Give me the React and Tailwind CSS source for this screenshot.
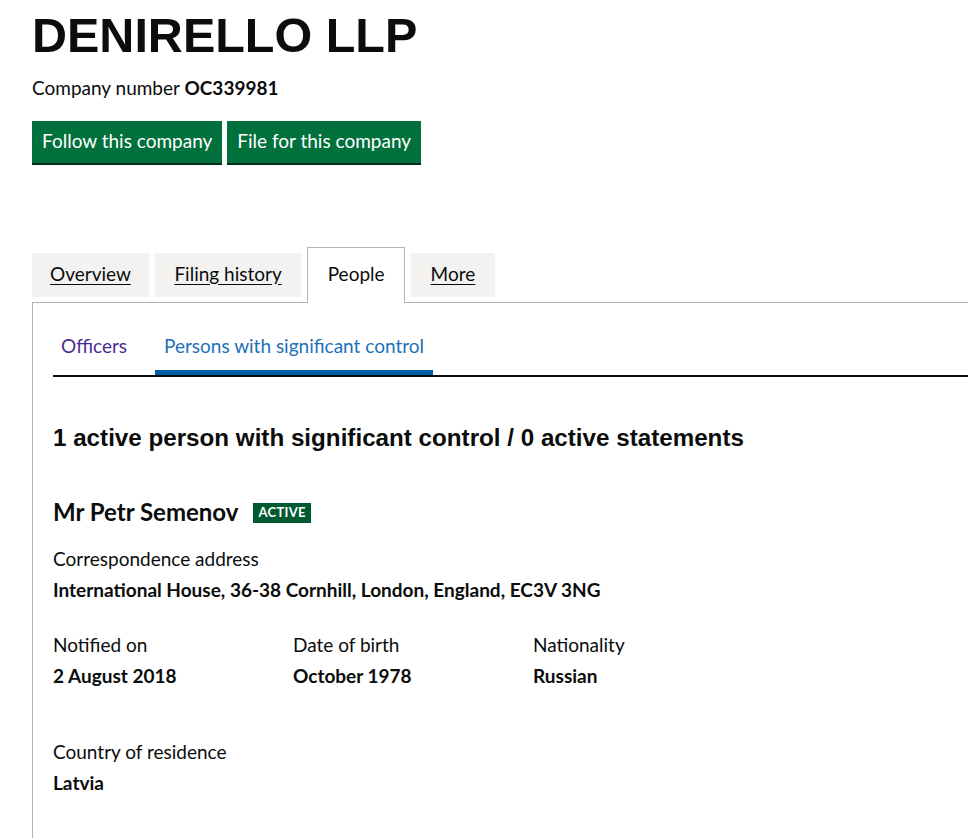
const body = "font-['Lato','Liberation_Sans',sans-serif]";

export default function App() {
  return (
    <div className={`min-h-[840px] bg-white text-[#0b0c0c] ${body} overflow-hidden`}>
      <div className="pl-[32px] pt-[8px]">
        {/* Company header */}
        <h1 className="font-['Liberation_Sans',Arial,sans-serif] font-bold text-[48.5px] leading-[54px]">
          DENIRELLO LLP
        </h1>
        <p className="mt-[13px] text-[19px] leading-[25px]">
          Company number <strong className="font-bold">OC339981</strong>
        </p>
        <div className="mt-[21px] flex gap-[5px]">
          <Button>Follow this company</Button>
          <Button>File for this company</Button>
        </div>

        {/* Main tabs */}
        <div className="mt-[84px] flex items-end gap-[6px]">
          <Tab label="Overview" pad="px-[18px]" />
          <Tab label="Filing history" pad="px-[19.5px]" />
          <div className="relative z-10 -mb-px flex h-[56px] items-center border border-b-0 border-[#b1b4b6] bg-white px-[19.5px] pb-[3px] text-[19px]">
            People
          </div>
          <Tab label="More" pad="px-[19.5px]" />
        </div>

        {/* Panel */}
        <div className="border-l border-t border-[#b1b4b6] pl-[20px] pt-[29px] pb-[40px]">
          <div className="flex border-b-2 border-[#0b0c0c] text-[19px]">
            <a className="px-[8px] pb-[14px] text-[#4c2c92]">Officers</a>
            <a className="ml-[20px] border-b-[5px] border-[#005ea5] px-[9px] pb-[9px] text-[#1d70b8]">
              Persons with significant control
            </a>
          </div>

          <h2 className="mt-[46px] font-['Liberation_Sans',Arial,sans-serif] text-[24.2px] font-bold leading-[30px]">
            1 active person with significant control / 0 active statements
          </h2>

          <div className="mt-[44px] flex items-center gap-[15px]">
            <h3 className="text-[24px] font-bold leading-[30px]">Mr Petr Semenov</h3>
            <span className="mt-[3px] flex h-[20px] items-center bg-[#005a30] px-[5px] text-[13px] font-bold tracking-[0.3px] text-white">
              ACTIVE
            </span>
          </div>

          <dl className="mt-[17px]">
            <dt className="text-[19px] leading-[30px]">Correspondence address</dt>
            <dd className="mt-[1px] text-[19px] font-bold leading-[30px]">
              International House, 36-38 Cornhill, London, England, EC3V 3NG
            </dd>
          </dl>

          <div className="mt-[25px] grid w-[720px] grid-cols-3">
            <Field label="Notified on" value="2 August 2018" />
            <Field label="Date of birth" value="October 1978" />
            <Field label="Nationality" value="Russian" />
          </div>

          <div className="mt-[46px]">
            <Field label="Country of residence" value="Latvia" />
          </div>
        </div>
      </div>
    </div>
  );
}

function Button({ children }) {
  return (
    <button className="h-[42px] bg-[#00703c] px-[10px] pb-[1px] text-[19px] text-white shadow-[0_2px_0_#002d18]">
      {children}
    </button>
  );
}

function Tab({ label, pad }) {
  return (
    <a className={`mb-[5px] flex h-[44px] items-center bg-[#f3f2f1] ${pad} pb-[2px] text-[19px] underline underline-offset-[3px]`}>
      {label}
    </a>
  );
}

function Field({ label, value }) {
  return (
    <div>
      <div className="text-[19px] leading-[30px]">{label}</div>
      <div className="mt-[1px] text-[19px] font-bold leading-[30px]">{value}</div>
    </div>
  );
}
